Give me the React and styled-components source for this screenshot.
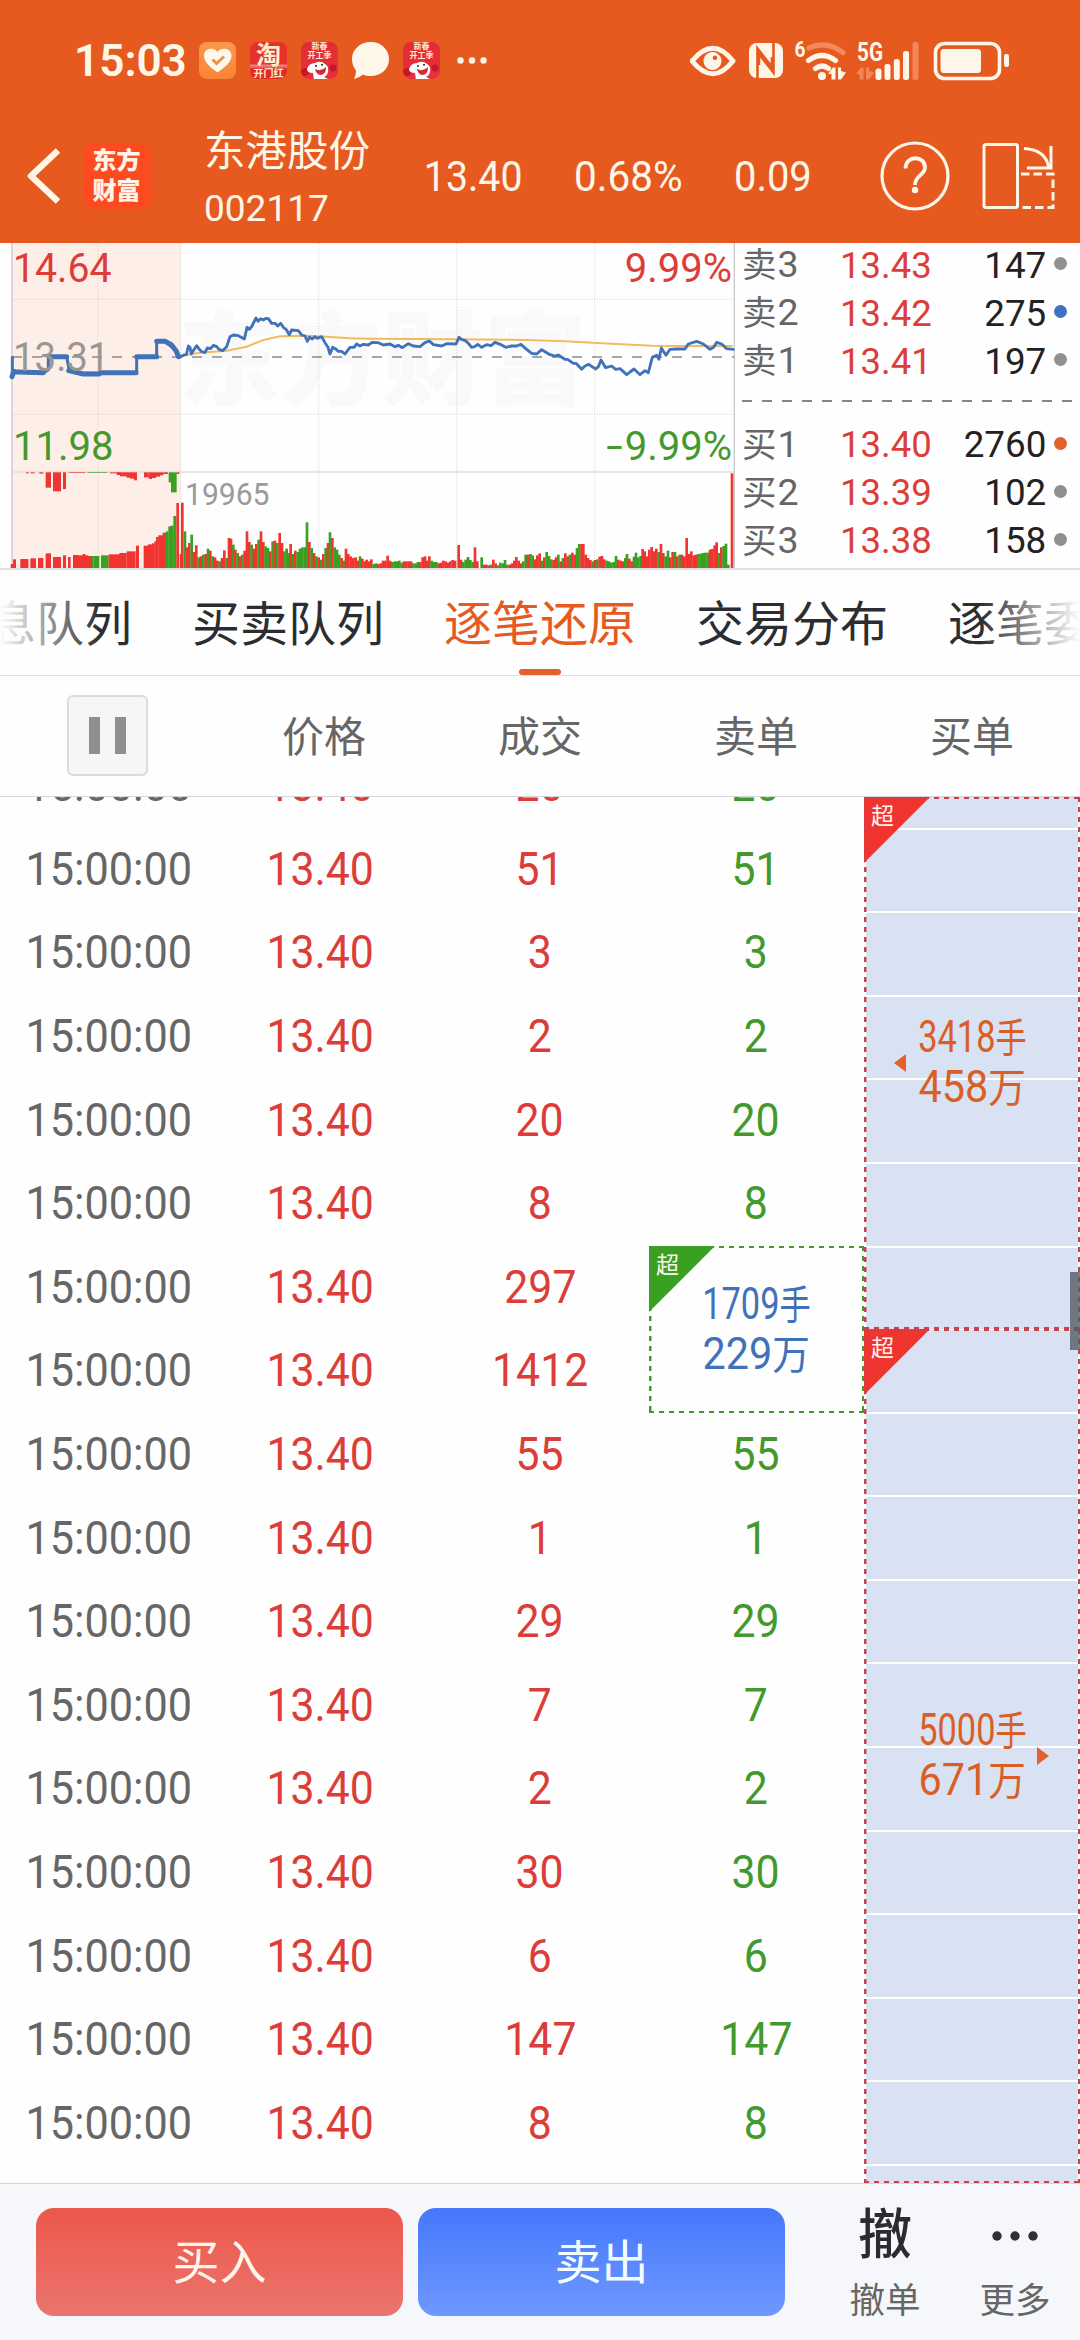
import React from "react";
import styled, { createGlobalStyle } from "styled-components";

const C = {
  brand: "#e65a1f",
  cream: "#fff6ea",
  red: "#dc3d39",
  green: "#43992c",
  barRed: "#f0342f",
  barGreen: "#3aa021",
  blue: "#3f72b8",
  gray: "#666666",
  ink: "#2c2d30",
  line: "#dfe1e4",
};

const Global = createGlobalStyle`
  * { box-sizing: border-box; }
  html, body { margin: 0; padding: 0; background: #fefefe; }
  body {
    font-family: Roboto, "Noto Sans CJK SC", sans-serif;
    color: ${C.ink};
  }
`;

const Screen = styled.div`
  width: 1080px;
  height: 2340px;
  display: flex;
  flex-direction: column;
  overflow: hidden;
  background: #fefefe;
`;

const Num = styled.span`
  display: inline-block;
  white-space: nowrap;
  transform: scaleX(${(p) => p.$x || 1});
  transform-origin: ${(p) => p.$from || "center"};
`;

/* ---------- status bar ---------- */

const Top = styled.header`
  height: 243px;
  flex: none;
  background: ${C.brand};
  color: ${C.cream};
`;

const StatusBar = styled.div`
  height: 122px;
  padding: 0 70px 1px 74px;
  display: flex;
  align-items: center;
  justify-content: space-between;
`;

const StatusGroup = styled.div`
  display: flex;
  align-items: center;
  gap: ${(p) => p.$gap}px;
`;

const Clock = styled.div`
  width: 111px;
  font-size: 45px;
  line-height: 50px;
  font-weight: 600;
  white-space: nowrap;
`;

const AppTile = styled.div`
  width: 37px;
  height: 37px;
  border-radius: 8px;
  overflow: hidden;
  background: ${(p) => p.$bg};
  display: flex;
  flex-direction: column;
  align-items: center;
  justify-content: ${(p) => p.$justify || "center"};
`;

const TileText = styled.div`
  font-size: ${(p) => p.$size}px;
  line-height: ${(p) => p.$lh}px;
  font-weight: 700;
  color: #ffeccd;
  white-space: nowrap;
`;

function JdTile() {
  return (
    <AppTile $bg="linear-gradient(#e22c35, #e8303c)" $justify="flex-start">
      <TileText $size={8} $lh={10}>新春</TileText>
      <TileText $size={8} $lh={8}>开工季</TileText>
      <svg width="37" height="19" viewBox="0 0 37 19">
        <circle cx="4" cy="12" r="4" fill="#c7162a" />
        <circle cx="32" cy="8" r="3.400" fill="#c7162a" />
        <path d="M13 20 L12 13 Q6 13 6 9 Q8 3 14 3 Q20 0 24 4 Q28 6 27 12 Q26 16 23 17 L29 20Z" fill="#fff" />
        <path d="M14 9 Q20 12 25 7 Q25 15 19 15 Q15 14 14 9Z" fill="#d22a33" />
        <circle cx="15" cy="6" r="1" fill="#222" />
        <circle cx="21" cy="4.800" r="1" fill="#222" />
      </svg>
    </AppTile>
  );
}

const MoreDots = styled.svg`
  margin-left: 3px;
`;

function StatusLeft() {
  return (
    <StatusGroup $gap={14}>
      <Clock><Num $x={0.98} $from="left">15:03</Num></Clock>
      <AppTile $bg="linear-gradient(#fb9a4c, #f98436)">
        <svg width="37" height="37" viewBox="0 0 37 37">
          <path d="M18.5 30.5 C11 25 5 20 5 14 C5 6.500 14 4.500 18.500 10 C23 4.500 32.500 6.500 32.500 14 C32.500 20 26 25 18.500 30.500Z" fill="#fff8ec" />
          <path d="M13.500 17.500 L17.500 21.500 L25 14.500" fill="none" stroke="#ee9440" strokeWidth="3" />
        </svg>
      </AppTile>
      <AppTile $bg="linear-gradient(#e8302a 0 58%, #e98a86 64%, #e32a22 74%)">
        <TileText $size={25} $lh={26}>淘</TileText>
        <TileText $size={10} $lh={10}>开门红</TileText>
      </AppTile>
      <JdTile />
      <svg width="37" height="37" viewBox="0 0 37 37">
        <path d="M19 0 C29 0 37 7.500 37 17 C37 27 29 34 19 34 C16 34 13 33.500 11 32.500 Q7 36 2 37 Q4 33 4 28.500 Q0 24 0 17 C0 7.500 8 0 19 0Z" fill={C.cream} />
      </svg>
      <JdTile />
      <MoreDots width="31" height="8" viewBox="0 0 31 8">
        {[3.5, 15, 26.5].map((x) => <circle key={x} cx={x} cy="3.500" r="3.200" fill={C.cream} />)}
      </MoreDots>
    </StatusGroup>
  );
}

function StatusRight() {
  return (
    <svg width="320" height="50" viewBox="690 35 320 50" fill={C.cream}>
      <path d="M692 60 Q713 34.500 733 60 Q713 85.500 692 60Z" fill="none" stroke={C.cream} strokeWidth="5" strokeLinejoin="round" />
      <path fillRule="evenodd" d="M712.500 51 a9 9 0 1 0 .01 0Z M715 54.500 a2.300 2.300 0 1 1 -.01 0Z" />
      <rect x="749" y="42" width="34" height="35" rx="8" />
      <path d="M757.500 77 V47.500 L772 66 V56 M773.500 42 V71.500 L759 53 V64" fill="none" stroke={C.brand} strokeWidth="2.600" />
      <text x="794.500" y="56" fontSize="22" fontWeight="700" textLength="11" lengthAdjust="spacingAndGlyphs">6</text>
      <g fill="none" strokeLinecap="round" strokeWidth="5.200">
        <path d="M809 47 Q826 39 843 51.500" stroke="#f48a5c" />
        <path d="M808.500 59.500 Q822 49.500 835.500 59.500" stroke={C.cream} />
        <path d="M815.500 67.500 Q822 62.500 828.500 67.500" stroke={C.cream} />
      </g>
      <circle cx="822" cy="75" r="4" />
      <path d="M828 73 L833 66.500 H835.500 V78.500 H831.500 V73Z M838 66.500 H841 V70 L846 71.500 L841 78.500 H838Z" />
      <text x="857" y="60" fontSize="25" fontWeight="700" textLength="26" lengthAdjust="spacingAndGlyphs">5G</text>
      <path d="M856 73 L861 66.500 H863.500 V78.500 H859.500 V73Z M866 66.500 H869 V70 L874 71.500 L869 78.500 H866Z" fill="#f4855a" />
      <rect x="875.500" y="67.500" width="6" height="11.500" rx="2.500" />
      <rect x="884.500" y="63" width="6" height="16" rx="2.500" />
      <rect x="893.800" y="58" width="6" height="21" rx="2.500" />
      <rect x="903" y="50" width="6" height="29" rx="2.500" />
      <rect x="912.500" y="41" width="6" height="38" rx="2.500" fill="#f4855a" />
      <rect x="935.500" y="42.500" width="64" height="35" rx="9" fill="none" stroke={C.cream} strokeWidth="3.600" />
      <rect x="940.500" y="48" width="40.500" height="24" rx="3.500" />
      <rect x="1004" y="53" width="5" height="13" rx="2" />
    </svg>
  );
}

/* ---------- title bar ---------- */

const TitleBar = styled.div`
  height: 121px;
  padding: 0 26px 14px 27px;
  display: grid;
  grid-template-columns: 56px 121px 213px 157px 160px 145px 103px 72px;
  grid-template-rows: 107px;
  align-items: center;
`;

const Logo = styled.div`
  width: 68px;
  height: 66px;
  border-radius: 12px;
  background: #fd4b21;
  color: #fff4e8;
  font-family: "Noto Sans CJK SC", sans-serif;
  font-size: 24px;
  line-height: 30px;
  font-weight: 900;
  padding-top: 1px;
  padding-right: 1px;
  text-align: center;
`;

const Stock = styled.div`
  padding: 4px 0 0 0;
  display: flex;
  flex-direction: column;
`;

const StockName = styled.div`
  font-size: 41.5px;
  line-height: 60px;
  white-space: nowrap;
`;

const StockCode = styled.div`
  font-size: 37px;
  line-height: 48px;
  margin-top: 3px;
`;

const Quote = styled.div`
  font-size: 42px;
  line-height: 50px;
  padding-top: 2px;
`;

function Header() {
  return (
    <Top>
      <StatusBar>
        <StatusLeft />
        <StatusRight />
      </StatusBar>
      <TitleBar>
        <svg width="34" height="56" viewBox="0 0 34 56" fill="none" stroke={C.cream} strokeWidth="6.500">
          <path d="M31 2.500 L4 28 L31 53.500" strokeLinejoin="round" />
        </svg>
        <Logo>东方<br />财富</Logo>
        <Stock>
          <StockName>东港股份</StockName>
          <StockCode>002117</StockCode>
        </Stock>
        <Quote><Num $x={0.935} $from="right">13.40</Num></Quote>
        <Quote><Num $x={0.965} $from="left">0.68%</Num></Quote>
        <Quote><Num $x={0.95} $from="left">0.09</Num></Quote>
        <svg width="72" height="72" viewBox="0 0 72 72" fill="none" stroke={C.cream}>
          <circle cx="36" cy="36" r="33" strokeWidth="3.200" />
          <path d="M26.500 28.500 C26.500 15 46 15 46 27.500 C46 35.500 36 35 36 45" strokeWidth="3.800" />
          <circle cx="36" cy="50" r="3.200" fill={C.cream} stroke="none" />
        </svg>
        <svg width="74" height="68" viewBox="0 0 74 68" fill="none" stroke={C.cream} strokeWidth="3">
          <rect x="2" y="2.500" width="33.500" height="63" rx="2" />
          <path d="M42 6.500 Q64 8 66.500 25 M69 4 V26 H45" />
          <path d="M39 32 H71 V65.500 H39" strokeDasharray="8.500 4" />
        </svg>
      </TitleBar>
    </Top>
  );
}

/* ---------- chart + order book ---------- */

const Market = styled.section`
  height: 327px;
  flex: none;
  display: flex;
  border-bottom: 2px solid ${C.line};
`;

const ChartBox = styled.div`
  position: relative;
  width: 735px;
  flex: none;
  overflow: hidden;
`;

const ChartSvg = styled.svg`
  display: block;
  position: relative;
`;

const Watermark = styled.div`
  position: absolute;
  left: 178px;
  top: 40px;
  font-family: "Noto Sans CJK SC", sans-serif;
  font-size: 102px;
  line-height: 140px;
  font-weight: 900;
  color: #f9f8fa;
`;

const ChartLabel = styled.div`
  position: absolute;
  top: ${(p) => p.$top}px;
  ${(p) => (p.$right ? "right: 3px;" : `left: ${p.$left || 13}px;`)}
  font-size: ${(p) => p.$size || 40}px;
  line-height: 40px;
  color: ${(p) => p.$color};
  white-space: nowrap;
`;

const Minus = styled.span`
  display: inline-block;
  margin-right: 5px;
  transform: scaleX(1.5);
`;

const VOLUME =
  "547r196 555g110 562r62 568r75 575g100 582r48 589r68 596g32 603r35 610g40 617r42 624g58 631r52 638g35 645r32 652r22 659g20 666r30 673r53 680g30 687r90 693r88 700g70 706r55 713g45 720r35 727g40 734r52 741r110 748r78 755g70 762r58 769r72 776g85 783r110 790r78 797g65 804g60 811r50 818g80 825r82 832g75 839r105 846r75 853g50 860g58 867g45 872r72 879g42 886r52 893g48 900g58 907g62 914g62 921g137 928r78 935g60 942r45 949g35 956r32 963g25 970r42 977g60 984r75 990g107 997r90 1004g62 1011g55 1018g40 1025r30 1032g22 1038r58 1045r42 1052r35 1060r30 1067r32 1074r22 1080g35 1087r28 1094r20 1100r25 " +
  "1107r20 1114r26 1121g12 1128g14 1135r12 1142r14 1149r22 1156r22 1163r37 1170r22 1177g18 1184g20 1191g20 1198g22 1205g16 1212r20 1219r20 1226r20 1233r20 1240g14 1247g14 1254g18 1261r18 1268r32 1275r35 1282r22 1288r35 1295g22 1302g18 1309g18 1316r14 1323r16 1330r22 1337r20 1344r16 1351r20 1358r24 1365r22 1376r69 1383r25 1390g18 1397g25 1404g33 1411g24 1418g18 1425r62 1432r20 1445g32 1452r10 1459r10 1466r8 1473g10 1480r25 1487r14 1494g8 1501g16 1508g14 1515g24 1522g10 1529r10 1536r14 1543r22 1549r33 1556r22 1563r14 1570g20 1577g40 1584r40 1591g42 1598g38 1605r26 1612r38 1619r44 1626g22 1633r32 1640g48 1647g36 1654g26 1661r24 1668r32 1675g40 1682r20 1689g30 1696r44 1703r35 1710g40 1717r46 1724r40 1731g60 1738g72 1745r72 1750r72 1757r40 1764r30 1771r24 1778g20 1785r24 1792g26 1799r34 1806r36 1813r26 1820g22 1827g20 1834g16 1841g18 1848g36 1855r25 1862r22 1869r20 1876g30 1881g42 1888r28 1895r20 1902g34 1908g46 1915g32 1922g36 1928r57 1934r50 1941r35 1948r55 1955r63 1962r50 1969r58 1976g48 1983r72 1990r45 1997g35 2004g52 2011r32 2018r48 2025g48 2032r35 2039g40 2046r40 2053r35 2060r90 2067r42 2074r50 2081r38 2088r40 2095g42 2102g43 2109g45 2116g46 2123g46 2130r55 2137r57 2144r68 2150r77 2157g45 2164r62 2171g66 2178g73 2185g10 2196r284";

const volumeBars = VOLUME.split(" ").map((t) => {
  const [, x, c, h] = t.match(/^(\d+)([rg])(\d+)$/);
  return { x: +x, h: +h, c: c === "r" ? C.barRed : C.barGreen };
});

/* opening auction volume: x, width, height, colour */
const auctionBars = [
  [32, 8, 12, "r"], [39, 9, 26, "r"], [61, 24, 27, "r"], [91, 17, 29, "r"], [114, 16, 30, "r"],
  [137, 16, 44, "r"], [159, 24, 33, "r"], [189, 9, 38, "r"], [204, 8, 33, "r"], [219, 16, 39, "r"],
  [234, 30, 38, "r"], [248, 8, 42, "r"], [264, 12, 36, "r"], [276, 4, 36, "g"], [280, 18, 36, "g"], [303, 23, 38, "g"],
  [326, 34, 41, "r"], [358, 22, 45, "r"], [380, 27, 50, "r"], [408, 9, 67, "r"], [431, 15, 67, "r"],
  [444, 12, 71, "r"], [456, 8, 74, "r"], [463, 8, 80, "r"], [468, 8, 93, "r"], [475, 14, 98, "r"],
  [488, 10, 106, "r"], [498, 8, 110, "g"], [505, 8, 125, "g"], [512, 9, 127, "g"], [520, 9, 156, "g"],
  [529, 8, 195, "r"], [539, 5, 42, "r"],
];

/* unmatched auction volume hanging from the mid line */
const hangingBars = [
  [78, 8, 3, "r"], [92, 12, 3, "r"], [118, 12, 4, "r"], [137, 16, 46, "r"], [159, 24, 57, "r"], [189, 9, 50, "r"],
  [206, 50, 2, "r"], [262, 60, 2, "g"], [330, 30, 3, "r"], [350, 12, 8, "r"], [360, 22, 12, "r"], [380, 12, 16, "r"],
  [390, 12, 19, "r"], [402, 9, 24, "r"], [432, 14, 15, "r"], [446, 10, 20, "r"], [456, 12, 17, "r"],
  [468, 12, 13, "r"], [480, 10, 9, "r"], [490, 14, 5, "r"], [506, 8, 30, "g"], [513, 17, 60, "g"], [530, 8, 5, "r"],
];

const PRICE =
  "542,350 552,345 559,344 565,318 570,322 574,342 581,330 590,317 598,328 605,335 615,338 622,324 632,326 640,316 650,320 657,328 668,332 680,320 690,290 700,285 715,287 733,297 741,262 748,268 756,258 768,234 774,244 782,236 790,240 797,235 805,236 815,250 826,250 833,258 842,250 850,262 858,268 868,284 875,270 895,272 905,285 915,288 922,304 928,292 937,297 945,290 952,295 965,290 975,308 984,322 990,342 998,322 1006,326 1015,334 1025,334 1035,342 1050,322 1062,322 1070,312 1080,318 1090,313 " +
  "1105,315 1116,307 1135,308 1150,315 1170,312 1185,320 1195,316 1207,323 1225,311 1240,318 1260,320 1275,308 1288,303 1300,314 1325,318 1340,311 1368,312 1377,292 1384,298 1396,302 1405,310 1415,322 1424,320 1433,313 1445,322 1460,314 1473,317 1485,307 1503,314 1517,322 1535,318 1550,318 1563,313 1580,328 1595,340 1610,342 1625,329 1650,344 1665,348 1675,345 1695,358 1703,358 1720,370 1728,370 1745,388 1755,378 1766,373 1787,387 1795,380 1803,360 1817,383 1835,378 1847,388 1860,386 1880,404 1890,396 1902,387 1920,404 1935,392 1945,398 1957,352 1970,346 1977,358 1984,324 1998,346 2010,328 2030,327 2055,327 2065,312 2090,304 2110,312 2130,328 2141,322 2150,307 2165,312 2180,326 2200,328";

function Chart() {
  const color = (c) => (c === "r" ? C.barRed : C.barGreen);
  return (
    <ChartBox>
      <Watermark>东方财富</Watermark>
      <ChartSvg width="735" height="325" viewBox="0 9 2205 975">
        <rect x="37" y="9" width="505" height="975" fill="#fdeee7" />
        <g stroke="#cfc9c9" strokeWidth="2.500" strokeDasharray="3 5">
          <path d="M38 178 H2202 M38 523 H2202 M294 9 V984 M542 9 V984 M956 9 V984 M1370 9 V984 M1784 9 V984" />
        </g>
        <path d="M36 9 V984" stroke="#c9c6c9" strokeWidth="4" />
        <path d="M36 696 H2204" stroke="#dedede" strokeWidth="5" />
        <path d="M2203 9 V984" stroke="#c8cad0" strokeWidth="4" />
        <path d="M36 351 H2202" stroke="#8a8a8a" strokeWidth="5" strokeDasharray="30 30" />
        <path d="M542,347 L600,338 680,332 740,320 790,300 840,289 920,287 980,290 1050,295 1110,296 1370,298 1575,300 1695,304 1835,311 1955,317 2035,318 2198,318" fill="none" stroke="#f0bc5e" strokeWidth="6" />
        <g fill="none" stroke={C.blue} strokeLinejoin="round" strokeLinecap="round">
          <path d="M37,352 V410 M44,393 L80,398 130,398 145,390 V350 H200 L208,392 230,400 H410 V350 H470 V304 H495 L532,334 V350" strokeWidth="9" />
          <path d="M36,410 L42,394 M52,396 L130,398 M150,350 H200 M206,392 L250,402 H298 L302,398 H408 M410,350 H470 M470,304 H495 L514,314 528,332 536,350" strokeWidth="15" />
          <polyline points={PRICE} strokeWidth="8.500" />
        </g>
        {auctionBars.map(([x, w, h, c], i) => <rect key={i} x={x} y={984 - h} width={w} height={h} fill={color(c)} />)}
        {hangingBars.map(([x, w, h, c], i) => <rect key={i} x={x} y={697} width={w} height={h} fill={color(c)} />)}
        {volumeBars.map((b) => <rect key={b.x} x={b.x - 4} y={984 - b.h} width="8" height={b.h} fill={b.c} />)}
      </ChartSvg>
      <ChartLabel $top={6} $color={C.red}><Num $x={0.98} $from="left">14.64</Num></ChartLabel>
      <ChartLabel $top={95} $color="#9a9694"><Num $x={0.96} $from="left">13.31</Num></ChartLabel>
      <ChartLabel $top={184} $color={C.green}>11.98</ChartLabel>
      <ChartLabel $top={231} $left={185} $size={32} $color="#9a9a9a"><Num $x={0.94} $from="left">19965</Num></ChartLabel>
      <ChartLabel $top={6} $right $color={C.red}>9.99%</ChartLabel>
      <ChartLabel $top={184} $right $color={C.green}><Minus>-</Minus>9.99%</ChartLabel>
    </ChartBox>
  );
}

const Book = styled.div`
  flex: 1;
  margin-top: -3px;
  padding: 0 6px 0 7px;
  display: flex;
  flex-direction: column;
`;

const BookRow = styled.div`
  height: 48.2px;
  flex: none;
  display: grid;
  grid-template-columns: 98px 93px 113px 28px;
  align-items: center;
  font-size: 37.5px;
  line-height: 48px;
  white-space: nowrap;
`;

const BookSide = styled.span`
  color: ${C.gray};
  font-size: 34.5px;
  & > span { font-size: 37.5px; margin-left: 1px; }
`;

const BookPrice = styled.span`
  color: ${C.red};
`;

const BookVolume = styled.span`
  text-align: right;
  color: #222;
`;

const Dot = styled.i`
  width: 13px;
  height: 13px;
  margin: -2px 0 0 8px;
  border-radius: 50%;
  background: ${(p) => p.$color};
`;

const BookDivider = styled.div`
  height: 2px;
  flex: none;
  margin: 15px 0 18px;
  background: repeating-linear-gradient(90deg, #858585 0 10px, transparent 10px 20px);
`;

const asks = [
  ["卖", 3, "13.43", 147, "#909090"],
  ["卖", 2, "13.42", 275, "#3f72c4"],
  ["卖", 1, "13.41", 197, "#909090"],
];
const bids = [
  ["买", 1, "13.40", 2760, "#e06228"],
  ["买", 2, "13.39", 102, "#908e92"],
  ["买", 3, "13.38", 158, "#908e92"],
];

function BookRows({ rows }) {
  return rows.map(([side, level, price, volume, dot]) => (
    <BookRow key={side + level}>
      <BookSide>{side}<span>{level}</span></BookSide>
      <BookPrice><Num $x={0.975} $from="left">{price}</Num></BookPrice>
      <BookVolume><Num $x={0.98} $from="right">{volume}</Num></BookVolume>
      <Dot $color={dot} />
    </BookRow>
  ));
}

/* ---------- tabs ---------- */

const Tabs = styled.nav`
  position: relative;
  height: 106px;
  flex: none;
  display: flex;
  gap: 60px;
  overflow: hidden;
  border-bottom: 1px solid ${C.line};
  &::after {
    content: "";
    position: absolute;
    inset: 0;
    pointer-events: none;
    background: linear-gradient(90deg, #fefefe 0, rgba(254, 254, 254, 0) 100px, rgba(254, 254, 254, 0) 980px, #fefefe 1080px);
  }
`;

const Tab = styled.div`
  flex: none;
  width: 192px;
  display: flex;
  flex-direction: column;
  align-items: center;
  justify-content: space-between;
  font-size: 48px;
  line-height: 70px;
  padding-top: 20px;
  white-space: nowrap;
  color: ${(p) => (p.$active ? C.brand : C.ink)};
  &:first-child { margin-left: -60px; }
  &::after {
    content: "";
    width: 42px;
    height: 6px;
    border-radius: 3px;
    background: ${(p) => (p.$active ? "#e6602b" : "transparent")};
  }
`;

/* ---------- trades table ---------- */

const HeadRow = styled.div`
  height: 121px;
  flex: none;
  display: grid;
  grid-template-columns: repeat(5, 216px);
  align-items: center;
  justify-items: center;
  padding-bottom: 2px;
  font-size: 42px;
  color: ${C.gray};
  border-bottom: 1px solid #d3d5d7;
`;

const HeadLabel = styled.span`
  line-height: 60px;
  padding-top: 5px;
`;

const PauseButton = styled.button`
  width: 81px;
  height: 81px;
  margin: 0 1px 0 0;
  padding: 0;
  border: 2px solid #d9dcdc;
  border-radius: 6px;
  background: #f5f7f7;
  display: flex;
  align-items: center;
  justify-content: center;
  gap: 15px;
`;

const PauseBar = styled.i`
  width: 11px;
  height: 37px;
  background: #8e9090;
`;

const Body = styled.section`
  position: relative;
  height: 1386px;
  flex: none;
  display: flex;
  overflow: hidden;
`;

const Trades = styled.div`
  width: 864px;
  flex: none;
  margin-top: -52.5px;
  display: grid;
  grid-template-columns: repeat(4, 216px);
  grid-auto-rows: 83.6px;
`;

const Cell = styled.div`
  grid-row: ${(p) => p.$row};
  grid-column: ${(p) => p.$col};
  display: flex;
  align-items: center;
  justify-content: center;
  font-size: 45.5px;
  line-height: 50px;
  padding: 0 ${(p) => p.$right || 0}px 0 ${(p) => p.$left || 0}px;
  color: ${(p) => p.$color};
`;

const dash = (c, dir) => `repeating-linear-gradient(${dir}, ${c} 0 5px, transparent 5px 10px)`;

const orderFrame = (c) => `
  ${dash(c, "90deg")} 0 0 / 100% 2px no-repeat,
  ${dash(c, "90deg")} 0 100% / 100% 2px no-repeat,
  ${dash(c, "180deg")} 0 0 / 2.500px 100% no-repeat,
  ${dash(c, "180deg")} 100% 0 / 2.500px 100% no-repeat
`;

const Order = styled.div`
  position: relative;
  display: flex;
  flex-direction: column;
  align-items: center;
  justify-content: center;
  color: ${(p) => p.$text};
  &::after {
    content: "";
    position: absolute;
    inset: 0;
    background: ${(p) => orderFrame(p.$frame)};
  }
`;

const SellOrder = styled(Order)`
  grid-row: 7 / span 2;
  grid-column: 4;
  margin: 0 0 0 1px;
`;

const BuyColumn = styled.div`
  flex: 1;
  display: flex;
  flex-direction: column;
`;

const BuyOrder = styled(Order)`
  height: ${(p) => p.$height}px;
  flex: none;
  background:
    linear-gradient(#fff, #fff) 0 0 / 2px 100% no-repeat,
    linear-gradient(#fff, #fff) 100% 0 / 2px 100% no-repeat,
    repeating-linear-gradient(180deg, #fff 0 2px, #d8e2f2 2px 83.6px) 0 ${(p) => p.$offset}px / 100% 2000px;
`;

const OrderLine = styled.div`
  position: relative;
  height: 50px;
  width: 106px;
  display: flex;
  align-items: center;
  justify-content: center;
  font-size: 44px;
  line-height: 50px;
  white-space: nowrap;
`;

const Unit = styled.span`
  font-size: 40px;
`;

const Tag = styled.div`
  position: absolute;
  left: 0;
  top: 0;
  width: 66px;
  height: 66px;
  padding: 6px 0 0 7px;
  clip-path: polygon(0 0, 100% 0, 0 100%);
  background: ${(p) => p.$color};
  color: #fff3ee;
  font-size: 23px;
  line-height: 28px;
`;

const Arrow = styled.svg`
  position: absolute;
  top: calc(50% - 9px);
  left: ${(p) => p.$left}px;
`;

const ScrollThumb = styled.div`
  position: absolute;
  right: 0;
  top: 475px;
  width: 10px;
  height: 78px;
  background: rgba(85, 92, 102, 0.8);
`;

const trades = [
  [20, 20], [51, 51], [3, 3], [2, 2], [20, 20], [8, 8], [297, null], [1412, null], [55, 55],
  [1, 1], [29, 29], [7, 7], [2, 2], [30, 30], [6, 6], [147, 147], [8, 8],
];

function OrderText({ lots, money }) {
  return (
    <>
      <OrderLine><Num $x={0.78}>{lots}<Unit>手</Unit></Num></OrderLine>
      <OrderLine><Num $x={0.94}>{money}<Unit>万</Unit></Num></OrderLine>
    </>
  );
}

function TradeTable() {
  return (
    <Body>
      <Trades>
        {trades.map(([deal, sell], i) => (
          <React.Fragment key={i}>
            <Cell $row={i + 1} $col={1} $color={C.gray} $left={2}><Num $x={0.95}>15:00:00</Num></Cell>
            <Cell $row={i + 1} $col={2} $color={C.red} $right={7}><Num $x={0.94}>13.40</Num></Cell>
            <Cell $row={i + 1} $col={3} $color={C.red}><Num $x={0.94}>{deal}</Num></Cell>
            {sell !== null && <Cell $row={i + 1} $col={4} $color={C.green}><Num $x={0.94}>{sell}</Num></Cell>}
          </React.Fragment>
        ))}
        <SellOrder $text={C.blue} $frame={C.green}>
          <Tag $color={C.barGreen}>超</Tag>
          <OrderText lots="1709" money="229" />
        </SellOrder>
      </Trades>
      <BuyColumn>
        <BuyOrder $height={532} $offset={-53} $text="#d95f27" $frame="#cf3f4a">
          <Tag $color={C.barRed}>超</Tag>
          <OrderText lots="3418" money="458" />
          <Arrow $left={30} width="12" height="18" viewBox="0 0 12 18"><path d="M0 9 L12 0 V18Z" fill="#e2622a" /></Arrow>
        </BuyOrder>
        <BuyOrder $height={854} $offset={-1} $text="#d95f27" $frame="#cf3f4a">
          <Tag $color={C.barRed}>超</Tag>
          <OrderText lots="5000" money="671" />
          <Arrow $left={173} width="12" height="18" viewBox="0 0 12 18"><path d="M12 9 L0 0 V18Z" fill="#e2622a" /></Arrow>
        </BuyOrder>
      </BuyColumn>
      <ScrollThumb />
    </Body>
  );
}

/* ---------- footer ---------- */

const Footer = styled.footer`
  flex: 1;
  padding: 24px 0 0 36px;
  display: flex;
  align-items: flex-start;
  background: #f6f7fb;
  border-top: 1px solid #d4d5d8;
`;

const TradeButton = styled.button`
  width: 367px;
  height: 108px;
  margin: 0 15px 0 0;
  padding: 2px 0 0;
  border: 0;
  border-radius: 18px;
  background: linear-gradient(${(p) => p.$from}, ${(p) => p.$to});
  color: ${(p) => p.$ink};
  font: 47px/60px Roboto, "Noto Sans CJK SC", sans-serif;
`;

const Action = styled.div`
  width: ${(p) => p.$width}px;
  margin-left: ${(p) => p.$left || 0}px;
  display: flex;
  flex-direction: column;
  align-items: center;
`;

const ActionIcon = styled.div`
  height: 56px;
  display: flex;
  align-items: center;
  font-size: 54px;
  line-height: 56px;
  font-weight: 500;
  color: #2c2c2f;
`;

const ActionLabel = styled.div`
  margin-top: 12px;
  font-size: 35.5px;
  line-height: 50px;
  color: ${C.gray};
`;

export default function App() {
  return (
    <Screen>
      <Global />
      <Header />
      <Market>
        <Chart />
        <Book>
          <BookRows rows={asks} />
          <BookDivider />
          <BookRows rows={bids} />
        </Book>
      </Market>
      <Tabs>
        {["消息队列", "买卖队列", "逐笔还原", "交易分布", "逐笔委托"].map((t, i) => (
          <Tab key={t} $active={i === 2}>{t}</Tab>
        ))}
      </Tabs>
      <HeadRow>
        <PauseButton aria-label="pause"><PauseBar /><PauseBar /></PauseButton>
        <HeadLabel>价格</HeadLabel>
        <HeadLabel>成交</HeadLabel>
        <HeadLabel>卖单</HeadLabel>
        <HeadLabel>买单</HeadLabel>
      </HeadRow>
      <TradeTable />
      <Footer>
        <TradeButton $from="#ed574b" $to="#ea756d" $ink="#fff4ea">买入</TradeButton>
        <TradeButton $from="#4677fc" $to="#6e98ff" $ink="#f2fdff">卖出</TradeButton>
        <Action $width={110} $left={30}>
          <ActionIcon>撤</ActionIcon>
          <ActionLabel>撤单</ActionLabel>
        </Action>
        <Action $width={110} $left={20}>
          <ActionIcon>
            <svg width="48" height="12" viewBox="0 0 48 12" fill="#2f3033">
              <circle cx="6" cy="6" r="4.700" /><circle cx="24" cy="6" r="4.700" /><circle cx="42" cy="6" r="4.700" />
            </svg>
          </ActionIcon>
          <ActionLabel>更多</ActionLabel>
        </Action>
      </Footer>
    </Screen>
  );
}
